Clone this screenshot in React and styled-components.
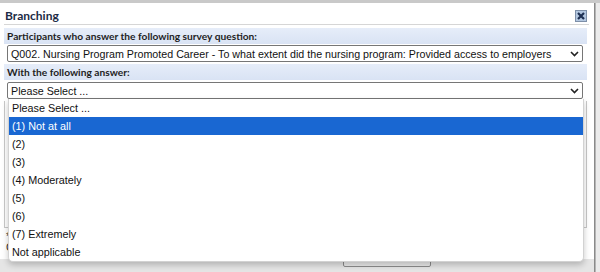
import styled, { createGlobalStyle } from 'styled-components';

const GlobalStyle = createGlobalStyle`
  html, body {
    margin: 0;
    padding: 0;
    background: #e7e7e7;
    overflow: hidden;
  }
  body {
    font-family: "Liberation Sans", Arial, sans-serif;
  }
`;

const Page = styled.div`
  width: 600px;
  height: 272px;
  display: flex;
  flex-direction: column;
  overflow: hidden;
`;

const TopStrip = styled.div`
  height: 3px;
  background: #c9c9c9;
`;

const Stage = styled.div`
  display: flex;
  flex: 1;
`;

const Dialog = styled.div`
  position: relative;
  width: 594px;
  display: flex;
  flex-direction: column;
  border-right: 1px solid #8a8a8a;
`;

const Body = styled.div`
  background: #fff;
  height: 256px;
  padding: 0 7px 0 4px;
  display: flex;
  flex-direction: column;
`;

const TitleBar = styled.div`
  height: 21px;
  display: flex;
  align-items: center;
  justify-content: space-between;
  padding: 0 2px 0 1px;
  border-bottom: 1px solid #d6d6d6;
  margin-right: -2px;
`;

const Title = styled.span`
  font-family: Lato, "Open Sans", sans-serif;
  font-weight: 700;
  font-size: 12px;
  color: #1c2b45;
  margin-top: 4px;
`;

const CloseButton = styled.button`
  width: 12px;
  height: 12px;
  padding: 0;
  border: 0;
  background: none;
  display: flex;
  margin-top: 5px;
`;

const Band = styled.div`
  height: 16px;
  margin-top: ${p => p.$top}px;
  background: linear-gradient(#e6edf9, #d9e3f4);
  display: flex;
  align-items: center;
  padding-left: 3px;
  font-family: Lato, "Open Sans", sans-serif;
  font-weight: 700;
  font-size: 10.2px;
  color: #1e1e1e;
`;

const SelectBox = styled.div`
  height: 15px;
  margin: ${p => p.$top}px 4px 0 3px;
  border: 1px solid #767676;
  border-radius: 2px;
  display: flex;
  align-items: center;
  justify-content: space-between;
  padding: 0 3px 0 3px;
  font-size: 10.7px;
  color: #111;
  background: #fff;
  white-space: nowrap;
  overflow: hidden;
`;

const Panel = styled.div`
  height: 126px;
  margin-top: 2px;
  border: 1px solid #c8c8c8;
  border-top: 0;
`;

const NoteLine = styled.div`
  width: fit-content;
  font-size: 11px;
  color: #333;
  line-height: 11px;
  padding-left: 2px;
  margin-top: ${p => p.$top || 0}px;
`;

const Footer = styled.div`
  flex: 1;
  background: #e5e5e5;
  display: flex;
  padding-left: 343px;
`;

const SaveButton = styled.button`
  margin-top: -14px;
  height: 22px;
  width: 88px;
  border: 1px solid #8c8c8c;
  border-radius: 2px;
  background: #ebebeb;
  font-family: "Liberation Sans", Arial, sans-serif;
  font-size: 11px;
  color: #222;
  padding: 4px 0 0;
  text-align: center;
`;

const Outside = styled.div`
  flex: 1;
  background: #ebebeb;
  border-left: 1px solid #b5b5b5;
`;

const ListBox = styled.ul`
  position: absolute;
  left: 8px;
  top: 96px;
  width: 574px;
  margin: 0;
  padding: 0;
  list-style: none;
  background: #fff;
  border: 1px solid #d2d2d2;
  border-top: 0;
  border-radius: 0 0 5px 5px;
  box-shadow: 0 3px 6px rgba(0, 0, 0, 0.22);
  overflow: hidden;
`;

const Option = styled.li`
  height: 18px;
  line-height: 18px;
  padding-left: 3px;
  font-size: 10.8px;
  color: ${p => (p.$active ? '#fff' : '#111')};
  background: ${p => (p.$active ? '#1967d2' : 'transparent')};
`;

const Chevron = () => (
  <svg width="9" height="6" viewBox="0 0 9 6">
    <polyline points="1,1 4.5,4.5 8,1" fill="none" stroke="#222" strokeWidth="1.6" />
  </svg>
);

const CloseIcon = () => (
  <svg width="12" height="12" viewBox="0 0 12 12">
    <rect x="0.5" y="0.5" width="11" height="11" fill="#b3c7e0" stroke="#7d8fa8" />
    <path d="M3 3 L9 9 M9 3 L3 9" stroke="#1d2f52" strokeWidth="2.2" />
  </svg>
);

const options = [
  'Please Select ...',
  '(1) Not at all',
  '(2)',
  '(3)',
  '(4) Moderately',
  '(5)',
  '(6)',
  '(7) Extremely',
  'Not applicable',
];

export default function App() {
  return (
    <Page>
      <GlobalStyle />
      <TopStrip />
      <Stage>
        <Dialog>
          <Body>
            <TitleBar>
              <Title>Branching</Title>
              <CloseButton aria-label="Close">
                <CloseIcon />
              </CloseButton>
            </TitleBar>
            <Band $top={3}>Participants who answer the following survey question:</Band>
            <SelectBox $top={1}>
              <span>
                Q002. Nursing Program Promoted Career - To what extent did the nursing program: Provided access to employers
              </span>
              <Chevron />
            </SelectBox>
            <Band $top={2}>With the following answer:</Band>
            <SelectBox $top={2}>
              <span>Please Select ...</span>
              <Chevron />
            </SelectBox>
            <Panel />
            <NoteLine $top={3}>*</NoteLine>
            <NoteLine>C</NoteLine>
          </Body>
          <Footer>
            <SaveButton>Save and Close</SaveButton>
          </Footer>
          <ListBox>
            {options.map((o, i) => (
              <Option key={o} $active={i === 1}>
                {o}
              </Option>
            ))}
          </ListBox>
        </Dialog>
        <Outside />
      </Stage>
    </Page>
  );
}
